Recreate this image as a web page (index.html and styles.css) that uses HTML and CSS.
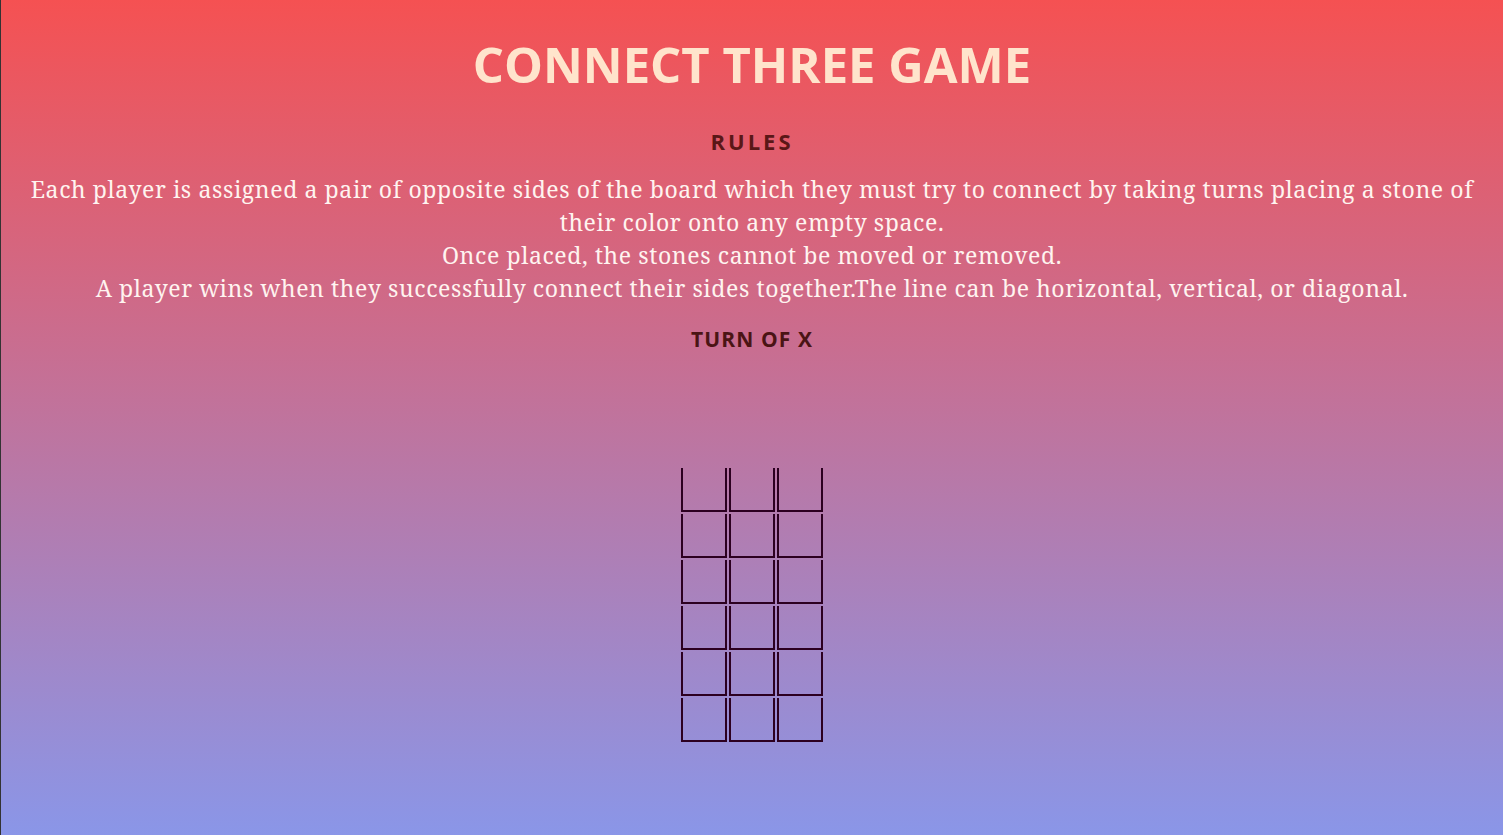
FILE: index.html
```html
<!DOCTYPE html>
<html>
<head>
<meta charset="utf-8">
<link rel="stylesheet" href="styles.css">
</head>
<body>
<div class="page">
  <h1 class="title">CONNECT THREE GAME</h1>
  <h2 class="rules-head">RULES</h2>
  <p class="rules">Each player is assigned a pair of opposite sides of the board which they must try to connect by taking turns placing a stone of their color onto any empty space.<br>Once placed, the stones cannot be moved or removed.<br>A player wins when they successfully connect their sides together.The line can be horizontal, vertical, or diagonal.</p>
  <h3 class="turn">TURN OF X</h3>
  <div class="board">
    <div class="cell"></div><div class="cell"></div><div class="cell"></div>
    <div class="cell"></div><div class="cell"></div><div class="cell"></div>
    <div class="cell"></div><div class="cell"></div><div class="cell"></div>
    <div class="cell"></div><div class="cell"></div><div class="cell"></div>
    <div class="cell"></div><div class="cell"></div><div class="cell"></div>
    <div class="cell"></div><div class="cell"></div><div class="cell"></div>
  </div>
</div>
</body>
</html>
```
FILE: styles.css
```css
html, body {
  margin: 0;
  padding: 0;
  height: 100%;
}
body {
  background: linear-gradient(to bottom, #f55152, #8a96e8);
  border-left: 1px solid #333;
  box-sizing: border-box;
  font-family: "Noto Serif", "DejaVu Serif", serif;
}
.page {
  display: flex;
  flex-direction: column;
  align-items: center;
  text-align: center;
  padding: 0 16px;
}
.title {
  font-family: "Open Sans", sans-serif;
  font-weight: 700;
  font-size: 49px;
  color: #ffe4cc;
  margin: 30px 0 0;
  line-height: 68px;
}
.rules-head {
  font-family: "Open Sans", sans-serif;
  font-weight: 700;
  font-size: 22px;
  letter-spacing: 3px;
  color: #5a1717;
  margin: 28px 0 0;
  line-height: 30px;
}
.rules {
  color: #fff4f0;
  font-size: 23px;
  letter-spacing: 0.6px;
  line-height: 33px;
  margin: 17px 0 0;
}
.turn {
  font-family: "Open Sans", sans-serif;
  font-weight: 700;
  font-size: 21px;
  letter-spacing: 1.1px;
  color: #4a1414;
  margin: 19px 0 0;
  line-height: 30px;
}
.board {
  display: grid;
  grid-template-columns: repeat(3, 46px);
  grid-auto-rows: 44px;
  gap: 2px;
  margin-top: 114px;
}
.cell {
  border: 2px solid #2c0020;
  border-top: none;
}
```
